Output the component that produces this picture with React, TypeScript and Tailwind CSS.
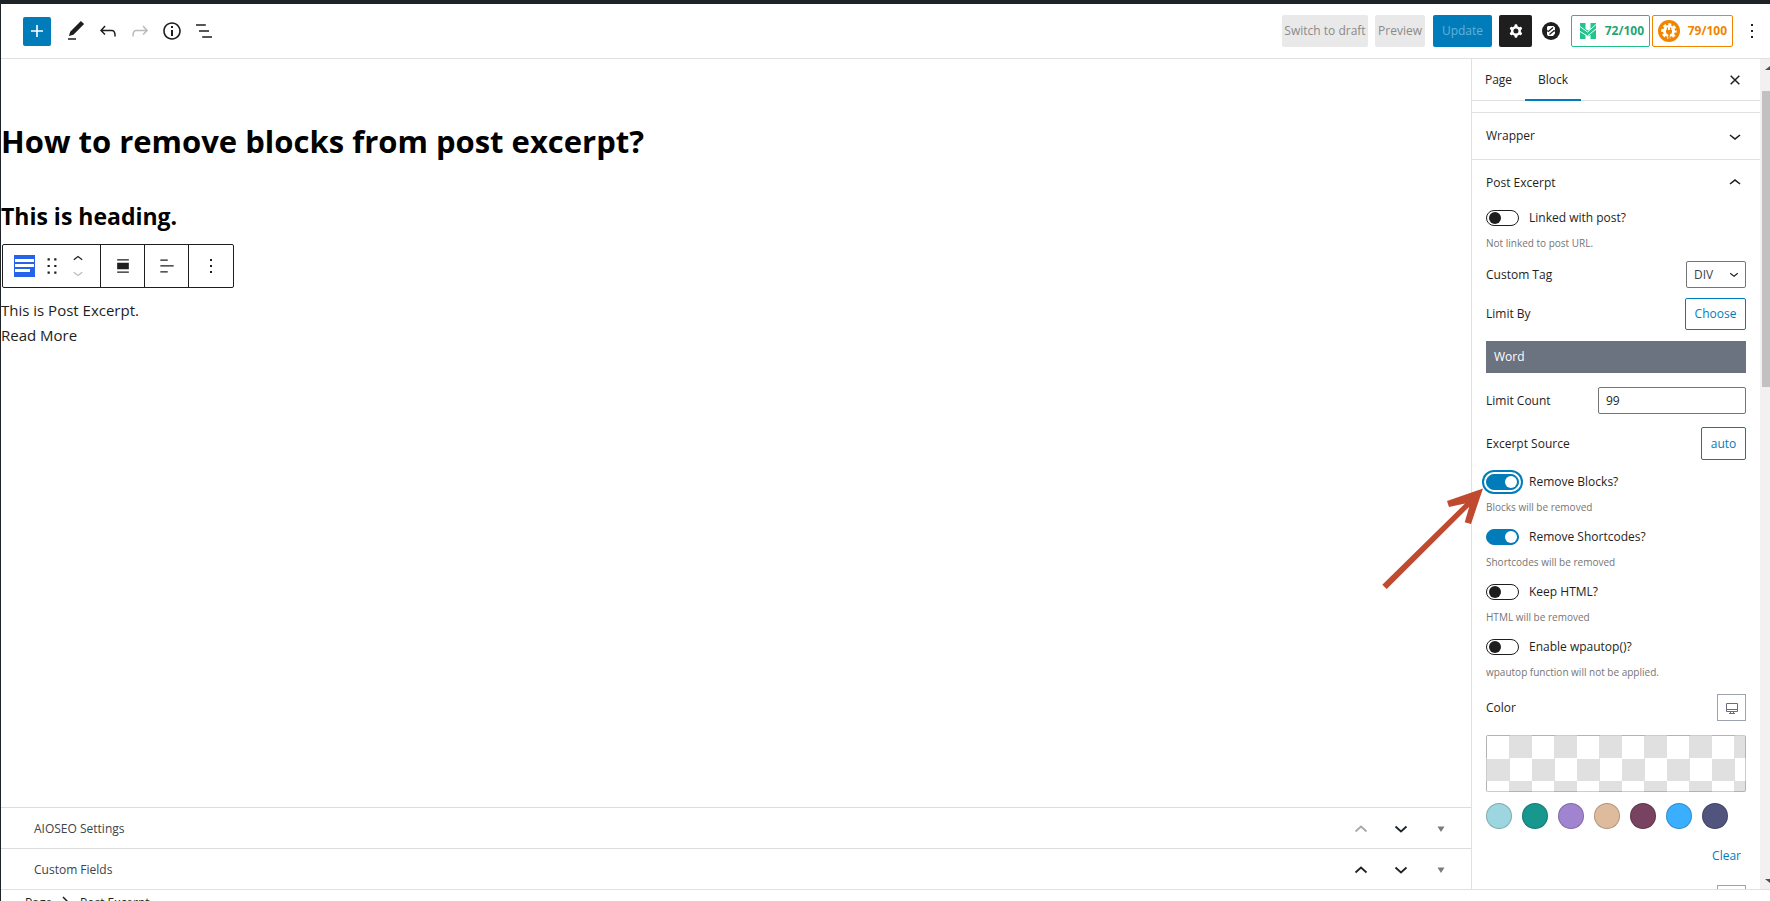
import React, { useState } from "react";

type ToggleProps = {
  id: string;
  label: string;
  help: string;
  initial?: boolean;
  focused?: boolean;
};

function Toggle({ id, label, help, initial = false, focused = false }: ToggleProps) {
  const [on, setOn] = useState(initial);
  return (
    <div className="h-[55px]">
      <div className="flex h-6 items-center gap-2.5">
        <span className="relative flex h-4 w-[33px] shrink-0">
          <input
            id={id}
            type="checkbox"
            checked={on}
            onChange={(e) => setOn(e.target.checked)}
            className={
              "h-4 w-full appearance-none rounded-full border " +
              (on ? "border-[#007cba] bg-[#007cba] " : "border-[#1e1e1e] bg-white ") +
              (focused ? "ring-2 ring-[#007cba] ring-offset-2" : "")
            }
          />
          <span
            className={
              "pointer-events-none absolute top-0.5 h-3 w-3 rounded-full " +
              (on ? "right-0.5 bg-white" : "left-[3px] bg-[#1e1e1e]")
            }
          />
        </span>
        <label htmlFor={id}>{label}</label>
      </div>
      <p className="mt-[5px] text-[10px] leading-4 text-[#757575]">{help}</p>
    </div>
  );
}

function Chevron({ up = false, className = "h-6 w-6" }: { up?: boolean; className?: string }) {
  return (
    <svg viewBox="0 0 24 24" className={className} fill="currentColor" aria-hidden="true">
      {up ? (
        <path d="M6.5 12.4L12 8l5.5 4.4-.9 1.2L12 10l-4.5 3.6-1-1.2z" />
      ) : (
        <path d="M17.5 11.6L12 16l-5.5-4.4.9-1.2L12 14l4.5-3.6 1 1.2z" />
      )}
    </svg>
  );
}

function MetaRow({ title, dim = false }: { title: string; dim?: boolean }) {
  return (
    <div className="flex h-[41px] items-center border-t border-[#dcdcde] pt-0.5 pr-2.5 pl-[33px] font-medium text-[#3c434a]">
      <h2 className="flex-1">{title}</h2>
      <div className="flex items-center">
        <button aria-label="Move up" className={"flex w-10 justify-center " + (dim ? "text-[#a7aaad]" : "text-[#1d2327]")}>
          <svg viewBox="0 0 14 14" className="h-3.5 w-3.5" fill="none" stroke="currentColor" strokeWidth="1.8"><path d="M1.5 9.5 7 4.5l5.5 5" /></svg>
        </button>
        <button aria-label="Move down" className="flex w-10 justify-center text-[#1d2327]">
          <svg viewBox="0 0 14 14" className="h-3.5 w-3.5" fill="none" stroke="currentColor" strokeWidth="1.8"><path d="M1.5 4.5 7 9.5l5.5-5" /></svg>
        </button>
        <button aria-label="Toggle panel" className="flex w-10 justify-center text-[#787c82]">
          <svg viewBox="0 0 14 14" className="h-3.5 w-3.5" fill="currentColor"><path d="M3.5 4.5h7L7 10z" /></svg>
        </button>
      </div>
    </div>
  );
}

function Gear({ className }: { className: string }) {
  return (
    <svg viewBox="0 0 24 24" className={className} fill="currentColor" aria-hidden="true">
      <path fillRule="evenodd" clipRule="evenodd" d="M10.289 4.836A1 1 0 0111.275 4h1.306a1 1 0 01.987.836l.244 1.466c.787.26 1.503.679 2.108 1.218l1.393-.522a1 1 0 011.216.437l.653 1.13a1 1 0 01-.23 1.273l-1.148.944a6.025 6.025 0 010 2.435l1.149.946a1 1 0 01.23 1.272l-.653 1.13a1 1 0 01-1.216.437l-1.394-.522c-.605.54-1.32.958-2.108 1.218l-.244 1.466a1 1 0 01-.987.836h-1.306a1 1 0 01-.986-.836l-.244-1.466a5.995 5.995 0 01-2.108-1.218l-1.394.522a1 1 0 01-1.217-.436l-.653-1.131a1 1 0 01.23-1.272l1.149-.946a6.026 6.026 0 010-2.435l-1.148-.944a1 1 0 01-.23-1.272l.653-1.131a1 1 0 011.217-.437l1.393.522a5.994 5.994 0 012.108-1.218l.244-1.466zM14.929 12a3 3 0 11-6 0 3 3 0 016 0z" />
    </svg>
  );
}

const swatches = ["#9dd6df", "#18978f", "#a084cf", "#dfbb9d", "#774360", "#3aafff", "#51557e"];

export default function App() {
  const [count, setCount] = useState("99");
  return (
    <div className="flex h-screen flex-col overflow-hidden border-t-4 border-l border-[#1d2327] bg-white font-['Open_Sans','Noto_Sans',sans-serif] text-[12px] text-[#1e1e1e]">
      <header className="flex h-[55px] shrink-0 items-center justify-between border-b border-[#e0e0e0] pr-1.5 pl-[22px]">
        <div className="flex items-center gap-2">
          <button aria-label="Add block" className="mr-[5px] flex h-[29px] w-7 items-center justify-center rounded-xs bg-[#007cba] text-white">
            <svg viewBox="0 0 24 24" className="h-6 w-6" fill="currentColor"><path d="M18 11.2h-5.2V6h-1.6v5.2H6v1.6h5.2V18h1.6v-5.2H18z" /></svg>
          </button>
          <button aria-label="Tools">
            <svg viewBox="0 0 24 24" className="h-6 w-6" fill="currentColor"><path d="M20.1 5.1L16.9 2 6.2 12.7l-1.3 4.4 4.5-1.3L20.1 5.1zM4 20.8h8v-1.5H4v1.5z" /></svg>
          </button>
          <button aria-label="Undo">
            <svg viewBox="0 0 24 24" className="h-6 w-6" fill="currentColor"><path d="M18.3 11.7c-.6-.6-1.4-.9-2.3-.9H6.7l2.9-3.3-1.1-1-4.5 5L8.5 16l1-1-2.7-2.7H16c.5 0 .9.2 1.3.5 1 1 1 3.4 1 4.5v.3h1.5v-.2c0-1.5 0-4.3-1.5-5.7z" /></svg>
          </button>
          <button aria-label="Redo" className="text-[#bbbbbb]">
            <svg viewBox="0 0 24 24" className="h-6 w-6" fill="currentColor"><path d="M15.6 6.5l-1.1 1 2.9 3.3H8c-.9 0-1.7.3-2.3.9-1.4 1.5-1.4 4.2-1.4 5.6v.2h1.5v-.3c0-1.1 0-3.5 1-4.5.3-.3.7-.5 1.3-.5h9.2L14.5 15l1.1 1.1 4.6-4.6-4.6-5z" /></svg>
          </button>
          <button aria-label="Details">
            <svg viewBox="0 0 24 24" className="h-6 w-6" fill="currentColor"><path d="M12 3.2c-4.8 0-8.8 3.9-8.8 8.8 0 4.8 3.9 8.8 8.8 8.8 4.8 0 8.8-3.9 8.8-8.8 0-4.8-4-8.8-8.8-8.8zm0 16c-4 0-7.2-3.3-7.2-7.2C4.8 8 8 4.8 12 4.8s7.2 3.3 7.2 7.2c0 4-3.2 7.2-7.2 7.2zM11 17h2v-6h-2v6zm0-8h2V7h-2v2z" /></svg>
          </button>
          <button aria-label="List view">
            <svg viewBox="0 0 24 24" className="h-6 w-6" fill="currentColor"><path d="M13.8 5.2H4v1.5h9.8V5.2zm-3.6 12v1.5H20v-1.5h-9.8zm-3.2-6v1.5h10v-1.5H7z" /></svg>
          </button>
        </div>
        <div className="flex items-center">
          <button className="h-8 w-[86px] rounded-xs bg-[#e9e9e9] text-[#8a8a8a]">Switch to draft</button>
          <button className="ml-[7px] h-8 w-[50px] rounded-xs bg-[#e9e9e9] text-[#8a8a8a]">Preview</button>
          <button className="ml-2 h-8 w-[59px] rounded-xs bg-[#007cba] text-[#66b0d6]">Update</button>
          <button aria-label="Settings" className="ml-[7px] flex h-8 w-[33px] items-center justify-center rounded-xs bg-[#1e1e1e] text-white">
            <Gear className="h-5 w-5" />
          </button>
          <button aria-label="Blocks" className="ml-2.5 h-[18px] w-[18px]">
            <svg viewBox="0 0 18 18" className="h-full w-full">
              <circle cx="9" cy="9" r="9" fill="#1e1e1e" />
              <path d="M6 4h5.500l1.500 1.500V8l-1 1 1 1v1.500L11 14H6l-1-1.500V10l1-1-1-1.500V5z" fill="#fff" />
              <path d="m6 9.800 5-4.300M7.500 12.500l5-4.300" stroke="#1e1e1e" strokeWidth="1.200" />
            </svg>
          </button>
          <button className="ml-[11px] flex h-8 w-[79px] items-center justify-between rounded-xs border border-[#1fbf87] pr-[5px] pl-2 font-bold text-[#1fa672]">
            <svg viewBox="0 0 16 16" className="h-4 w-4">
              <path d="M0 0h5.500v6L8 7.500 10.500 6V0H16v16h-5.500v-4L8 13.500 5.500 12v4H0z" fill="#22c58b" />
              <path d="M0 3.500 7.500 9 16 1.500M0 8.500l7.500 4.500L16 6" fill="none" stroke="#fff" strokeWidth="1" />
            </svg>
            72/100
          </button>
          <button className="ml-[2px] flex h-8 w-[81px] items-center justify-between rounded-xs border border-[#f18500] pr-[5px] pl-[5px] font-bold text-[#f18500]">
            <svg viewBox="0 0 22 22" className="h-[22px] w-[22px]">
              <circle cx="11" cy="11" r="11" fill="#f18500" />
              <circle cx="11" cy="11" r="6" fill="#fff" />
              <circle cx="11" cy="11" r="6.500" fill="none" stroke="#fff" strokeWidth="2.600" strokeDasharray="3 2.105" strokeDashoffset="1.500" />
              <path d="M8 10h6v2a2.700 2.700 0 0 1-2.200 2.600V19h-1.600v-4.400A2.700 2.700 0 0 1 8 12zM8.800 7.500H10V10H8.800zM12 7.500h1.200V10H12z" fill="#f18500" />
            </svg>
            79/100
          </button>
          <button aria-label="Options" className="ml-[7px]">
            <svg viewBox="0 0 24 24" className="h-6 w-6" fill="currentColor"><path d="M13 19h-2v-2h2v2zm0-6h-2v-2h2v2zm0-6h-2V5h2v2z" /></svg>
          </button>
        </div>
      </header>

      <div className="flex min-h-0 flex-1">
        <main className="flex min-w-0 flex-1 flex-col">
          <article className="flex-1 text-black">
            <h1 className="mt-[60px] text-[31px] leading-[44px] font-bold">How to remove blocks from post excerpt?</h1>
            <h2 className="mt-[37px] text-[23px] leading-8 font-bold">This is heading.</h2>
            <div role="toolbar" aria-label="Block tools" className="mt-3 ml-px flex h-11 w-fit divide-x divide-[#1e1e1e] rounded-xs border border-[#1e1e1e] text-[#1e1e1e]">
              <div className="flex w-[98px] shrink-0 items-center pl-[11px]">
                <button aria-label="Post excerpt block" className="mr-[7px] shrink-0">
                  <svg viewBox="0 0 21 22" className="h-[22px] w-[21px]">
                    <path d="M0 0h21v22H0z" fill="#2563eb" />
                    <path d="M1 4h19v3H1zM1 9h19v3H1zM1 14h15v3H1z" fill="#fff" />
                  </svg>
                </button>
                <button aria-label="Drag" className="shrink-0">
                  <svg viewBox="0 0 18 18" className="h-5 w-5" fill="currentColor"><path d="M5 4h2V2H5v2zm6-2v2h2V2h-2zm-6 8h2V8H5v2zm6 0h2V8h-2v2zm-6 6h2v-2H5v2zm6 0h2v-2h-2v2z" /></svg>
                </button>
                <div className="ml-1.5 flex shrink-0 flex-col">
                  <button aria-label="Move block up" className="flex h-3.5 items-center"><Chevron up className="h-5 w-5" /></button>
                  <button aria-label="Move block down" className="flex h-3.5 items-center text-[#bbbbbb]"><Chevron className="h-5 w-5" /></button>
                </div>
              </div>
              <button aria-label="Align" className="flex w-11 items-center justify-center">
                <svg viewBox="0 0 24 24" className="h-5 w-5" fill="currentColor"><path d="M19 5.500H5V4h14v1.500ZM19 20H5v-1.500h14V20ZM19 16H5V8h14v8Z" /></svg>
              </button>
              <button aria-label="Align text" className="flex w-11 items-center justify-center">
                <svg viewBox="0 0 24 24" className="h-5 w-5" fill="currentColor"><path d="M4 19.800h8.900v-1.500H4v1.500zm8.900-15.600H4v1.500h8.900V4.200zm-8.900 7v1.500h16v-1.500H4z" /></svg>
              </button>
              <button aria-label="More" className="flex w-11 items-center justify-center">
                <svg viewBox="0 0 24 24" className="h-6 w-6" fill="currentColor"><path d="M13 19h-2v-2h2v2zm0-6h-2v-2h2v2zm0-6h-2V5h2v2z" /></svg>
              </button>
            </div>
            <div className="mt-2.5 text-[15px] leading-[25px] text-[#1e1e1e]">
              <p>This is Post Excerpt.</p>
              <p>Read More</p>
            </div>
          </article>
          <MetaRow title="AIOSEO Settings" dim />
          <MetaRow title="Custom Fields" />
        </main>

        <aside className="relative flex w-[299px] shrink-0 border-l border-[#e0e0e0]">
          <div className="flex min-w-0 flex-1 flex-col">
            <div className="flex h-[42px] shrink-0 items-stretch border-b border-[#e0e0e0] pr-[17px]">
              <button className="w-[53px] pt-px">Page</button>
              <button className="-mb-px w-14 border-b-2 border-[#007cba] pt-0.5">Block</button>
              <button aria-label="Close" className="ml-auto">
                <svg viewBox="0 0 24 24" className="h-4 w-4" fill="none" stroke="currentColor" strokeWidth="2.200"><path d="m5.500 5.500 13 13M18.500 5.500l-13 13" /></svg>
              </button>
            </div>
            <div className="min-h-0 flex-1 overflow-hidden">
              <button className="mt-[11px] flex h-12 w-full items-center justify-between border-y border-[#e0e0e0] pr-[13px] pl-3.5">
                Wrapper
                <Chevron />
              </button>
              <button className="flex h-[46px] w-full items-center justify-between pr-[13px] pl-3.5">
                Post Excerpt
                <Chevron up />
              </button>
              <div className="pr-3.5 pl-3.5">
                <Toggle id="linked" label="Linked with post?" help="Not linked to post URL." />
                <div className="flex h-[27px] items-center justify-between">
                  <label htmlFor="tag">Custom Tag</label>
                  <span className="relative flex">
                    <select id="tag" className="h-[27px] w-[60px] appearance-none rounded-xs border border-[#757575] bg-white pl-[7px] text-[#3c434a]">
                      <option>DIV</option>
                    </select>
                    <Chevron className="pointer-events-none absolute top-1 right-[3px] h-[18px] w-[18px]" />
                  </span>
                </div>
                <div className="mt-2.5 flex h-8 items-center justify-between">
                  <span>Limit By</span>
                  <button className="h-8 w-[61px] rounded-xs border border-[#007cba] text-[#007cba]">Choose</button>
                </div>
                <div className="mt-[11px] h-8 bg-[#6b7280] px-2 leading-8 text-white">Word</div>
                <div className="mt-3.5 flex h-[27px] items-center justify-between">
                  <label htmlFor="count">Limit Count</label>
                  <input id="count" value={count} onChange={(e) => setCount(e.target.value)} className="h-[27px] w-[148px] rounded-xs border border-[#757575] px-[7px]" />
                </div>
                <div className="mt-[13px] flex h-[33px] items-center justify-between">
                  <span>Excerpt Source</span>
                  <button className="h-[33px] w-[45px] rounded-xs border border-[#007cba] text-[#007cba]">auto</button>
                </div>
                <div className="mt-2.5">
                  <Toggle id="blocks" label="Remove Blocks?" help="Blocks will be removed" initial focused />
                  <Toggle id="shortcodes" label="Remove Shortcodes?" help="Shortcodes will be removed" initial />
                  <Toggle id="html" label="Keep HTML?" help="HTML will be removed" />
                  <Toggle id="wpautop" label="Enable wpautop()?" help="wpautop function will not be applied." />
                </div>
                <div className="mt-1 flex h-[27px] items-center justify-between">
                  <span>Color</span>
                  <button aria-label="Device" className="flex h-[27px] w-[29px] items-center justify-center border border-[#9ca3af] text-[#6b6b7a]">
                    <svg viewBox="0 0 14 14" className="h-3.5 w-3.5" fill="none" stroke="currentColor"><path d="M1.500 2.500h11v8h-11zM1.500 8.500h11M5.500 10.500v2M8.500 10.500v2M4 12.500h6" /></svg>
                  </button>
                </div>
                <button aria-label="Custom color" className="mt-3.5 block h-[57px] w-full rounded-xs border border-black/20 bg-[repeating-conic-gradient(#e0e0e0_0_25%,#fff_0_50%)] bg-size-[45px_45px]" />
                <div className="mt-[11px] flex gap-2.5">
                  {swatches.map((c) => (
                    <button key={c} aria-label={c} style={{ backgroundColor: c }} className="h-[26px] w-[26px] rounded-full border border-black/20" />
                  ))}
                </div>
                <div className="mt-[15px] flex h-6 justify-end pr-[5px]">
                  <button className="text-[#007cba]">Clear</button>
                </div>
                <div className="mt-[17px] flex justify-end">
                  <button aria-label="Background device" className="h-7 w-[29px] border border-[#9ca3af]" />
                </div>
              </div>
            </div>
          </div>
          <div className="flex w-2.5 shrink-0 flex-col justify-between overflow-hidden bg-[#f1f1f1] pl-0.5" aria-hidden="true">
            <svg viewBox="0 0 8 32" className="h-8 w-2" fill="#505050"><path d="M3 11h5V7z" /></svg>
            <div className="mb-auto h-[296px] bg-[#c1c1c1]" />
            <svg viewBox="0 0 8 16" className="h-4 w-2" fill="#505050"><path d="M3 6h5v4z" /></svg>
          </div>
          <svg viewBox="0 0 104 104" className="pointer-events-none absolute top-[427px] -left-[92px] h-[104px] w-[104px]" fill="#c04a30" aria-hidden="true">
            <path d="M103 2.500 67 15l2 6 16-3.500L2.300 98.700l4.400 4.300L89.300 20.700l-4.600 15.600L91 38z" />
          </svg>
        </aside>
      </div>

      <footer className="flex h-3 shrink-0 items-start overflow-hidden border-t border-[#e0e0e0] pt-1 pl-6">
        <span className="w-[37px] shrink-0">Page</span>
        <svg viewBox="0 0 6 10" className="mt-0.5 mr-3 h-2.5 w-1.5" fill="none" stroke="currentColor" strokeWidth="1.500" aria-hidden="true"><path d="m1 1 4 4-4 4" /></svg>
        <span>Post Excerpt</span>
      </footer>
    </div>
  );
}
